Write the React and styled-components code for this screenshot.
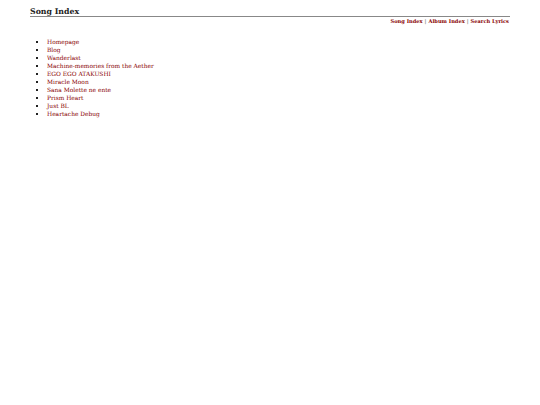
import React from 'react';
import styled, { createGlobalStyle } from 'styled-components';

const GlobalStyle = createGlobalStyle`
  html, body {
    margin: 0;
    padding: 0;
    background: #fff;
  }

  body {
    font-family: "DejaVu Serif", Georgia, serif;
    color: #222;
  }
`;

const Page = styled.div`
  width: 480px;
  margin: 0 auto;
  padding-top: 7px;
`;

const Header = styled.header`
  border-bottom: 1px solid #888;
`;

const Title = styled.h1`
  margin: 0;
  font-size: 7.8px;
  font-weight: 700;
  line-height: 9px;
  color: #222;
`;

const Nav = styled.nav`
  display: flex;
  justify-content: flex-end;
  gap: 2px;
  margin-top: 1px;
  padding-right: 1px;
  font-size: 5.1px;
  line-height: 7px;
  font-weight: 700;
  color: #777;
`;

const NavLink = styled.a`
  color: #800;
  text-decoration: none;
`;

const SongList = styled.ul`
  margin: 13px 0 0;
  padding-left: 17px;
  font-size: 5.9px;
  line-height: 8px;
  list-style: square;
`;

const SongItem = styled.li`
  color: #222;

  &::marker {
    font-size: 7px;
  }

  a {
    color: #800;
    text-decoration: none;
  }
`;

const navLinks = ['Song Index', 'Album Index', 'Search Lyrics'];

const songs = [
  'Homepage',
  'Blog',
  'Wanderlast',
  'Machine-memories from the Aether',
  'EGO EGO ATAKUSHI',
  'Miracle Moon',
  'Sana Molette ne ente',
  'Prism Heart',
  'Just BL',
  'Heartache Debug',
];

const App = () => (
  <>
    <GlobalStyle />
    <Page>
      <Header>
        <Title>Song Index</Title>
      </Header>
      <Nav>
        {navLinks.map((label, i) => (
          <React.Fragment key={label}>
            {i > 0 && <span>|</span>}
            <NavLink href="#">{label}</NavLink>
          </React.Fragment>
        ))}
      </Nav>
      <SongList>
        {songs.map(song => (
          <SongItem key={song}>
            <a href="#">{song}</a>
          </SongItem>
        ))}
      </SongList>
    </Page>
  </>
);

export default App;
